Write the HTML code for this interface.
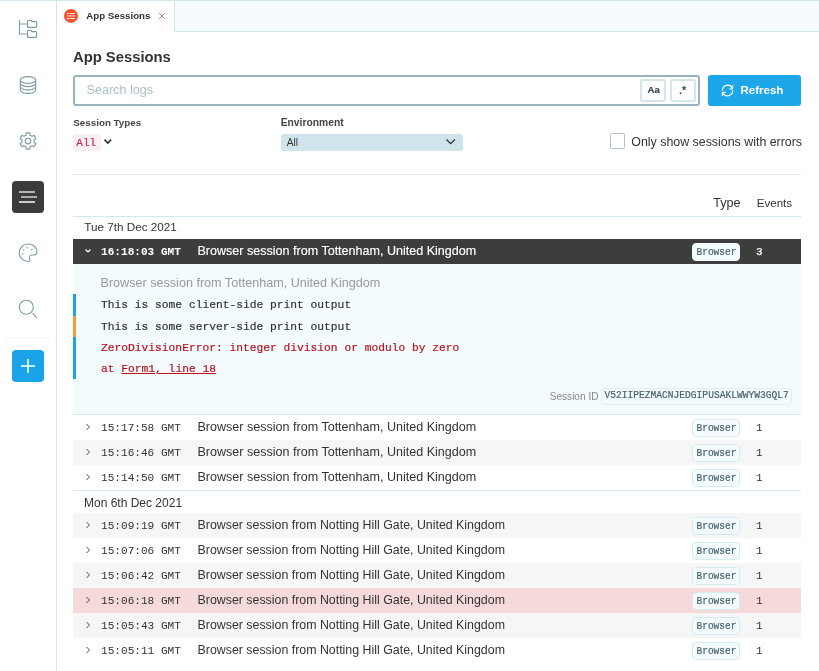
<!DOCTYPE html>
<html><head><meta charset="utf-8">
<style>
*{box-sizing:border-box;margin:0;padding:0}
html,body{width:819px;height:671px;overflow:hidden;background:#fff;font-family:"Liberation Sans",sans-serif;color:#333}
.a{position:absolute}
.t{position:absolute;white-space:pre;line-height:1}
.mono{font-family:"Liberation Mono",monospace}
.row{position:absolute;left:73px;width:728px;height:25px}
.row .chev{position:absolute;left:12px;top:8px}
.row .tm{position:absolute;left:28px;top:7.5px;font-family:"Liberation Mono",monospace;font-size:11.1px;color:#333;line-height:1;white-space:pre}
.row .desc{position:absolute;left:124.5px;top:5.5px;font-size:12.38px;color:#333;line-height:1;white-space:pre}
.row .chip{position:absolute;left:619px;top:4px;width:48px;height:18px;border:1px solid #d6eaf1;background:#f3fbfe;border-radius:4px}
.row .chip span{position:absolute;left:3.5px;top:3.5px;font-family:"Liberation Mono",monospace;font-size:9.5px;color:#4a636e;line-height:1;transform:scaleY(1.12);-webkit-text-stroke:0.2px #4a636e}
.row .ev{position:absolute;left:683px;top:7.5px;font-family:"Liberation Mono",monospace;font-size:11px;color:#333;line-height:1}
.g{background:#f6f6f6}
.p{background:#f6dadb}
</style></head><body>
<div id="root" style="position:absolute;left:0;top:0;width:819px;height:671px;background:#fff;will-change:transform">
<!-- frame -->
<div class="a" style="left:0;top:0;width:819px;height:1px;background:#d3e6ec"></div>
<div class="a" style="left:56px;top:0;width:1px;height:671px;background:#d3e6ec"></div>
<div class="a" style="left:174px;top:1px;width:645px;height:31px;background:#f5fbfe;border-left:1px solid #d3e6ec;border-bottom:1px solid #d3e6ec"></div>

<!-- sidebar icons -->
<svg class="a" style="left:0;top:0" width="56" height="400" viewBox="0 0 56 400" fill="none" stroke="#7d9ea9" stroke-width="1.15" stroke-linejoin="round" stroke-linecap="round">
  <path d="M19.5,20.5 V34 H27.5 M19.5,24 H27.5"/>
  <path d="M27.5,27.3 V21.2 Q27.5,20.5 28.2,20.5 H31 L32,21.6 H35.9 Q36.6,21.6 36.6,22.3 V26.6 Q36.6,27.3 35.9,27.3 H28.2 Q27.5,27.3 27.5,26.6Z"/>
  <path d="M27.5,37.3 V31.2 Q27.5,30.5 28.2,30.5 H31 L32,31.6 H35.9 Q36.6,31.6 36.6,32.3 V36.6 Q36.6,37.3 35.9,37.3 H28.2 Q27.5,37.3 27.5,36.6Z"/>
  <ellipse cx="28" cy="80" rx="7.6" ry="3.4"/>
  <path d="M20.4,80 V90 M35.6,80 V90"/>
  <path d="M20.4,83.2 A7.6,3.4 0 0 0 35.6,83.2 M20.4,86.5 A7.6,3.4 0 0 0 35.6,86.5 M20.4,90 A7.6,3.4 0 0 0 35.6,90"/>
  <path d="M25.98,135.14 L26.13,132.91 L29.87,132.91 L30.02,135.14 L32.07,136.32 L34.07,135.34 L35.94,138.57 L34.09,139.82 L34.09,142.18 L35.94,143.43 L34.07,146.66 L32.07,145.68 L30.02,146.86 L29.87,149.09 L26.13,149.09 L25.98,146.86 L23.93,145.68 L21.93,146.66 L20.06,143.43 L21.91,142.18 L21.91,139.82 L20.06,138.57 L21.93,135.34 L23.93,136.32Z"/>
  <circle cx="28" cy="141" r="2.8"/>
  <path d="M28.5,261.5 C23,261.5 19.3,257.5 19.3,252.8 C19.3,247.8 23.3,244 28.3,244 C33.3,244 37,247.5 37,251.8 C37,254 35.5,255 33.5,255 H32 C30,255 29,256.5 29.5,258.3 C30,260 30,261.5 28.5,261.5Z"/>
  <path d="M33,313.5 L36.5,317.3"/>
  <circle cx="26.3" cy="307.2" r="7"/>
</svg>
<svg class="a" style="left:0;top:0" width="56" height="400" viewBox="0 0 56 400">
  <circle cx="27.2" cy="247.8" r="0.8" fill="#7d9ea9"/>
  <circle cx="23.8" cy="250" r="0.8" fill="#7d9ea9"/>
  <circle cx="31.8" cy="249.5" r="0.8" fill="#7d9ea9"/>
  <circle cx="22.8" cy="254" r="0.8" fill="#7d9ea9"/>
  <rect x="12" y="181" width="32" height="32" rx="4" fill="#3b3b3b"/>
  <rect x="19" y="191" width="16" height="2" fill="#b4b4b4"/>
  <rect x="21" y="196" width="16" height="2" fill="#adadad"/>
  <rect x="19" y="201" width="16" height="2" fill="#cacaca"/>
  <rect x="5" y="337" width="46" height="1" fill="#eef6f9"/>
  <rect x="12" y="350" width="32" height="32" rx="4" fill="#1ba3e9"/>
  <rect x="21" y="365.2" width="14" height="1.7" fill="#e8f6fd"/>
  <rect x="27.15" y="359" width="1.7" height="14" fill="#e8f6fd"/>
</svg>

<!-- tab -->
<svg class="a" style="left:60px;top:5px" width="24" height="24" viewBox="60 5 24 24">
  <circle cx="71" cy="15.9" r="7" fill="#f4502e"/>
  <rect x="67" y="13" width="2.2" height="1" fill="#fff"/>
  <rect x="69.9" y="13" width="5" height="1" fill="#fff"/>
  <rect x="67" y="15.2" width="8" height="1.4" fill="#fcc0b0"/>
  <rect x="67" y="18.1" width="2.2" height="1" fill="#fff"/>
  <rect x="69.9" y="18.1" width="5" height="1" fill="#fff"/>
</svg>
<div class="t" style="left:86.3px;top:10.8px;font-size:9.7px;font-weight:700;color:#333">App Sessions</div>
<svg class="a" style="left:158px;top:11.5px" width="8" height="8" viewBox="0 0 8 8"><path d="M1.2,1.2 L6.8,6.8 M6.8,1.2 L1.2,6.8" stroke="#909090" stroke-width="1"/></svg>

<!-- header -->
<div class="t" style="left:73px;top:49.8px;font-size:14.8px;font-weight:700;color:#333">App Sessions</div>
<div class="a" style="left:73px;top:75px;width:627px;height:31px;border:2px solid #9ab4bf;border-radius:3px"></div>
<div class="t" style="left:86.5px;top:84.3px;font-size:12.6px;color:#a9c1ca">Search logs</div>
<div class="a" style="left:640px;top:79px;width:26px;height:23px;border:2px solid #d3e6ec;border-radius:3px"></div>
<div class="t" style="left:647.5px;top:85.4px;font-size:9.6px;letter-spacing:0.1px;font-weight:700;color:#36474f;-webkit-text-stroke:0.2px #36474f">Aa</div>
<div class="a" style="left:670px;top:79px;width:26px;height:23px;border:2px solid #d3e6ec;border-radius:3px"></div>
<div class="t" style="left:679px;top:84.7px;font-size:11px;font-weight:700;color:#36474f">.*</div>
<div class="a" style="left:708px;top:75px;width:93px;height:31px;background:#1ea6ea;border-radius:3px"></div>
<svg class="a" style="left:716px;top:78.7px" width="24" height="22" viewBox="716 78 24 22" fill="none" stroke="#fff" stroke-width="1.15">
  <path d="M722.4,89.5 A5.2,5.2 0 0 1 732.3,87.2 M732.6,84 V88 H729.2"/>
  <path d="M732.6,89.5 A5.2,5.2 0 0 1 722.7,91.8 M722.4,95 V91.3 H725.8"/>
</svg>
<div class="t" style="left:740.5px;top:85px;font-size:11.5px;font-weight:700;color:#fff">Refresh</div>

<!-- filters -->
<div class="t" style="left:73.3px;top:117.7px;font-size:9.8px;font-weight:700;color:#444">Session Types</div>
<div class="a" style="left:73px;top:134px;width:28px;height:16.5px;background:#f9eef1;border-radius:3px"></div>
<div class="t mono" style="left:76.3px;top:138px;font-size:11px;color:#c7254e;-webkit-text-stroke:0.15px #c7254e">All</div>
<svg class="a" style="left:102px;top:136px" width="12" height="10" viewBox="102 136 12 10"><path d="M104.5,139.6 L107.8,143 L111.1,139.6" fill="none" stroke="#333" stroke-width="1.6"/></svg>
<div class="t" style="left:280.7px;top:117.7px;font-size:10.3px;font-weight:700;color:#444">Environment</div>
<div class="a" style="left:281px;top:134px;width:182px;height:17px;background:#cfe4eb;border-radius:3px"></div>
<div class="t" style="left:286.8px;top:137.8px;font-size:10.2px;color:#333">All</div>
<svg class="a" style="left:444px;top:136px" width="14" height="10" viewBox="444 136 14 10"><path d="M446.5,139.5 L450.7,143.6 L454.9,139.5" fill="none" stroke="#333" stroke-width="1.3"/></svg>
<div class="a" style="left:610px;top:133px;width:15px;height:16px;border:1px solid #abc3cc;border-radius:1.5px;background:#fff"></div>
<div class="t" style="left:631.3px;top:135.9px;font-size:12.4px;color:#333">Only show sessions with errors</div>
<div class="a" style="left:73px;top:174px;width:728px;height:1px;background:#e8e8e8"></div>

<!-- table header -->
<div class="t" style="left:713.3px;top:196.5px;font-size:12.6px;color:#333">Type</div>
<div class="t" style="left:756.7px;top:196.5px;font-size:11.6px;color:#333">Events</div>
<div class="a" style="left:73px;top:216px;width:728px;height:1px;background:#d5e8ee"></div>
<div class="t" style="left:84.3px;top:221.4px;font-size:11.7px;color:#333">Tue 7th Dec 2021</div>

<!-- expanded row -->
<div class="row" style="top:239px;background:#3d3d3d">
  <svg class="a" style="left:11px;top:9px" width="8" height="6" viewBox="0 0 8 6"><path d="M1.5,1.5 L4,4 L6.5,1.5" fill="none" stroke="#fff" stroke-width="1.2"/></svg>
  <div class="tm" style="color:#fff;font-weight:700">16:18:03 GMT</div>
  <div class="desc" style="color:#fff;font-size:12.55px;-webkit-text-stroke:0.15px #fff">Browser session from Tottenham, United Kingdom</div>
  <div class="chip" style="border-color:#f3fbfe"><span>Browser</span></div>
  <div class="ev" style="color:#fff;-webkit-text-stroke:0.25px #fff">3</div>
</div>
<div class="a" style="left:73px;top:264px;width:728px;height:151px;background:#f4fbfe;border-bottom:1px solid #d5e8ee"></div>
<div class="t" style="left:100.5px;top:277.2px;font-size:12.6px;color:#999">Browser session from Tottenham, United Kingdom</div>
<div class="a" style="left:73px;top:294px;width:3px;height:22px;background:#1ba3e9"></div>
<div class="a" style="left:73px;top:316px;width:3px;height:21px;background:#f39a35"></div>
<div class="a" style="left:73px;top:337px;width:3px;height:42px;background:#1ba3e9"></div>
<div class="t mono" style="left:101px;top:300.4px;font-size:11.28px;-webkit-text-stroke:0.2px currentColor;color:#333">This is some client-side print output</div>
<div class="t mono" style="left:101px;top:322.4px;font-size:11.28px;-webkit-text-stroke:0.2px currentColor;color:#333">This is some server-side print output</div>
<div class="t mono" style="left:101px;top:343.4px;font-size:11.28px;-webkit-text-stroke:0.2px currentColor;color:#ba131c">ZeroDivisionError: integer division or modulo by zero</div>
<div class="t mono" style="left:101px;top:364.4px;font-size:11.28px;-webkit-text-stroke:0.2px currentColor;color:#ba131c">at <span style="text-decoration:underline">Form1, line 18</span></div>
<div class="t" style="left:549.7px;top:391.5px;font-size:10.1px;color:#888">Session ID</div>
<div class="a" style="left:601px;top:388px;width:191px;height:17px;border:1px solid #dfeef3;border-radius:4px"></div>
<div class="t mono" style="left:604.5px;top:391.1px;font-size:9.6px;color:#4a636e;transform:scaleY(1.12);-webkit-text-stroke:0.2px #4a636e">V52IIPEZMACNJEDGIPUSAKLWWYW3GQL7</div>

<!-- rows group 1 -->
<div class="row" style="top:415px"><svg class="chev" width="6" height="8" viewBox="0 0 6 8"><path d="M1.5,1 L4.5,4 L1.5,7" fill="none" stroke="#444" stroke-width="0.95"/></svg><div class="tm">15:17:58 GMT</div><div class="desc" style="font-size:12.55px">Browser session from Tottenham, United Kingdom</div><div class="chip"><span>Browser</span></div><div class="ev">1</div></div>
<div class="row g" style="top:440px"><svg class="chev" width="6" height="8" viewBox="0 0 6 8"><path d="M1.5,1 L4.5,4 L1.5,7" fill="none" stroke="#444" stroke-width="0.95"/></svg><div class="tm">15:16:46 GMT</div><div class="desc" style="font-size:12.55px">Browser session from Tottenham, United Kingdom</div><div class="chip"><span>Browser</span></div><div class="ev">1</div></div>
<div class="row" style="top:465px"><svg class="chev" width="6" height="8" viewBox="0 0 6 8"><path d="M1.5,1 L4.5,4 L1.5,7" fill="none" stroke="#444" stroke-width="0.95"/></svg><div class="tm">15:14:50 GMT</div><div class="desc" style="font-size:12.55px">Browser session from Tottenham, United Kingdom</div><div class="chip"><span>Browser</span></div><div class="ev">1</div></div>
<div class="a" style="left:73px;top:490px;width:728px;height:1px;background:#d5e8ee"></div>
<div class="t" style="left:84px;top:497px;font-size:12px;color:#333">Mon 6th Dec 2021</div>

<!-- rows group 2 -->
<div class="row g" style="top:513px"><svg class="chev" width="6" height="8" viewBox="0 0 6 8"><path d="M1.5,1 L4.5,4 L1.5,7" fill="none" stroke="#444" stroke-width="0.95"/></svg><div class="tm">15:09:19 GMT</div><div class="desc">Browser session from Notting Hill Gate, United Kingdom</div><div class="chip"><span>Browser</span></div><div class="ev">1</div></div>
<div class="row" style="top:538px"><svg class="chev" width="6" height="8" viewBox="0 0 6 8"><path d="M1.5,1 L4.5,4 L1.5,7" fill="none" stroke="#444" stroke-width="0.95"/></svg><div class="tm">15:07:06 GMT</div><div class="desc">Browser session from Notting Hill Gate, United Kingdom</div><div class="chip"><span>Browser</span></div><div class="ev">1</div></div>
<div class="row g" style="top:563px"><svg class="chev" width="6" height="8" viewBox="0 0 6 8"><path d="M1.5,1 L4.5,4 L1.5,7" fill="none" stroke="#444" stroke-width="0.95"/></svg><div class="tm">15:06:42 GMT</div><div class="desc">Browser session from Notting Hill Gate, United Kingdom</div><div class="chip"><span>Browser</span></div><div class="ev">1</div></div>
<div class="row p" style="top:588px"><svg class="chev" width="6" height="8" viewBox="0 0 6 8"><path d="M1.5,1 L4.5,4 L1.5,7" fill="none" stroke="#444" stroke-width="0.95"/></svg><div class="tm">15:06:18 GMT</div><div class="desc">Browser session from Notting Hill Gate, United Kingdom</div><div class="chip"><span>Browser</span></div><div class="ev">1</div></div>
<div class="row g" style="top:613px"><svg class="chev" width="6" height="8" viewBox="0 0 6 8"><path d="M1.5,1 L4.5,4 L1.5,7" fill="none" stroke="#444" stroke-width="0.95"/></svg><div class="tm">15:05:43 GMT</div><div class="desc">Browser session from Notting Hill Gate, United Kingdom</div><div class="chip"><span>Browser</span></div><div class="ev">1</div></div>
<div class="row" style="top:638px"><svg class="chev" width="6" height="8" viewBox="0 0 6 8"><path d="M1.5,1 L4.5,4 L1.5,7" fill="none" stroke="#444" stroke-width="0.95"/></svg><div class="tm">15:05:11 GMT</div><div class="desc">Browser session from Notting Hill Gate, United Kingdom</div><div class="chip"><span>Browser</span></div><div class="ev">1</div></div>
</div>
</body></html>
